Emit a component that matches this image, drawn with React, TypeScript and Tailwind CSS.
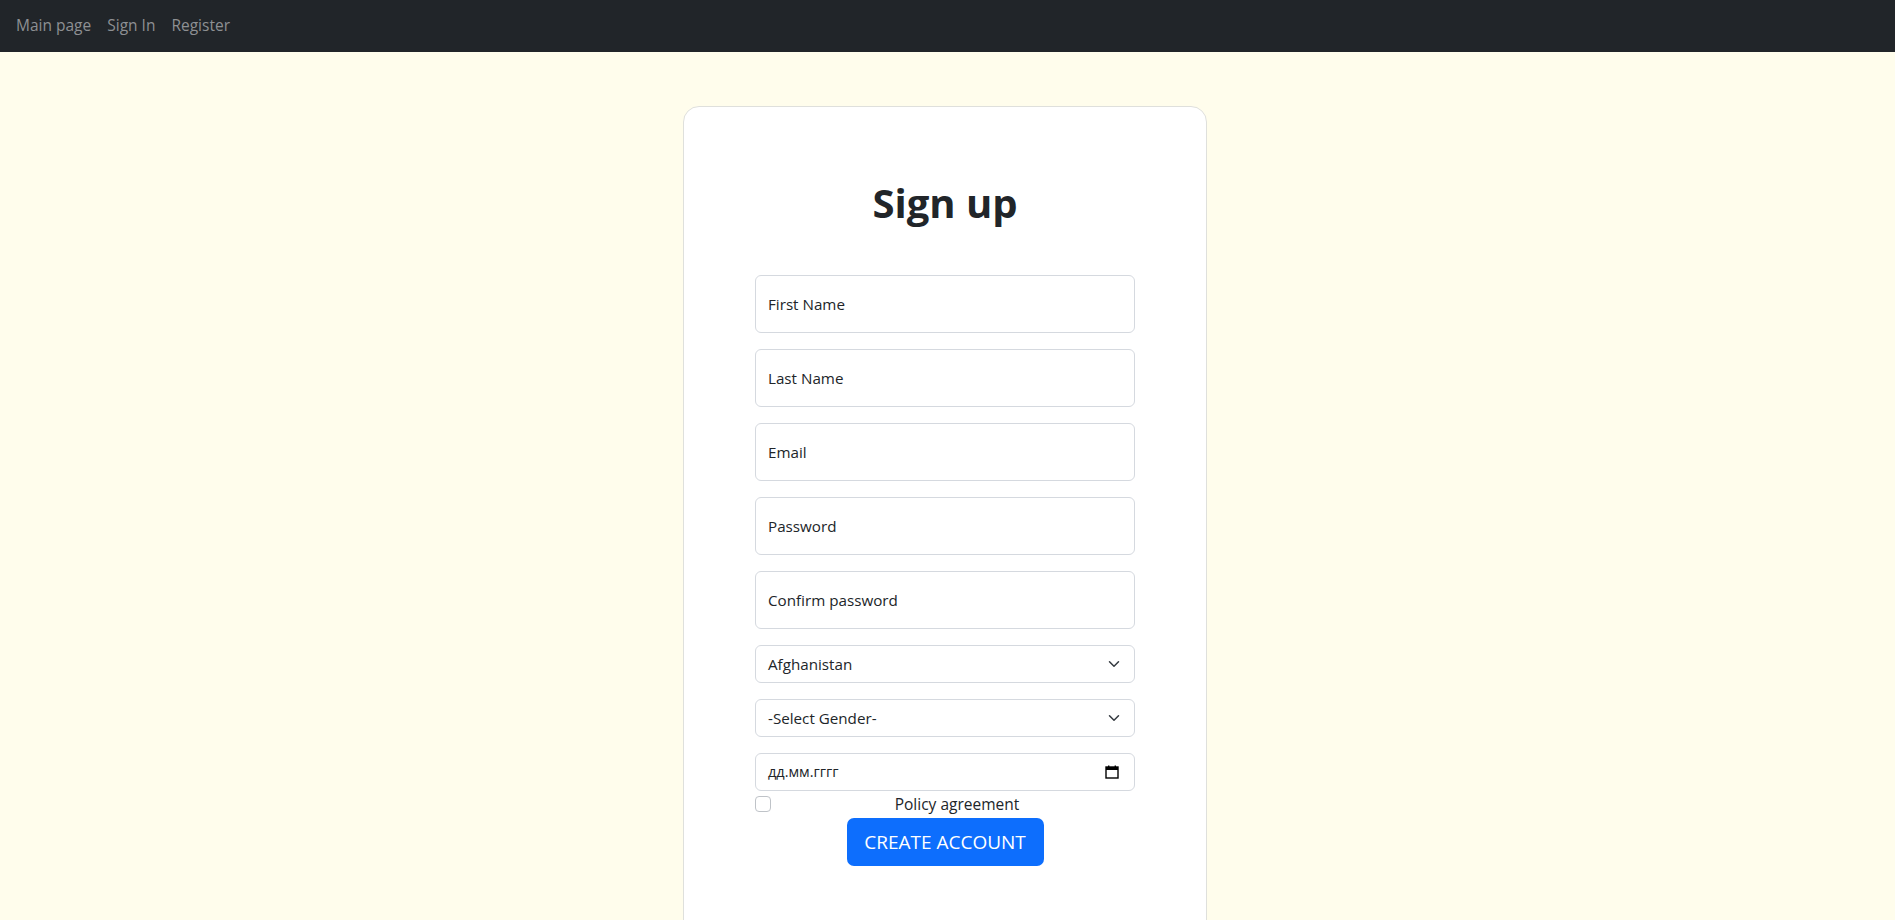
import React from "react";

const font = { fontFamily: '"Open Sans", "Noto Sans", "Liberation Sans", sans-serif' };

function Chevron() {
  return (
    <svg width="16" height="12" viewBox="0 0 16 16" className="absolute right-[12px] top-1/2 -translate-y-1/2">
      <path d="m2 5 6 6 6-6" fill="none" stroke="#343a40" strokeWidth="2" strokeLinecap="round" strokeLinejoin="round" />
    </svg>
  );
}

function FloatInput({ label }: { label: string }) {
  return (
    <div className="h-[58px] w-full rounded-[6px] border border-[#d5d9df] bg-white flex items-center pl-[12px] text-[15.2px] text-[#212529]">
      {label}
    </div>
  );
}

function SelectBox({ label }: { label: string }) {
  return (
    <div className="relative h-[38px] w-full rounded-[6px] border border-[#d5d9df] bg-white flex items-center pl-[12px] text-[15.2px] text-[#212529]">
      {label}
      <Chevron />
    </div>
  );
}

export default function App() {
  return (
    <div className="min-h-screen bg-[#fffdec]" style={font}>
      <nav className="h-[52px] bg-[#212529] flex items-center px-[8px]">
        {["Main page", "Sign In", "Register"].map((t) => (
          <a key={t} className="px-[8px] text-[15.5px] text-[#8e9093] cursor-pointer">
            {t}
          </a>
        ))}
      </nav>
      <div className="flex justify-center pr-[5px]">
        <div className="mt-[54px] w-[524px] rounded-[16px] border border-[#dfe0dc] bg-white pt-[72px] pb-[80px]">
          <h1 className="text-center text-[40px] leading-[48px] font-bold text-[#212529]">Sign up</h1>
          <div className="mx-auto mt-[48px] w-[380px] flex flex-col">
            <div className="flex flex-col gap-[16px]">
              <FloatInput label="First Name" />
              <FloatInput label="Last Name" />
              <FloatInput label="Email" />
              <FloatInput label="Password" />
              <FloatInput label="Confirm password" />
              <SelectBox label="Afghanistan" />
              <SelectBox label="-Select Gender-" />
              <div className="relative h-[38px] w-full rounded-[6px] border border-[#d5d9df] bg-white flex items-center pl-[12px] text-[14.5px] text-[#212529]">
                дд.мм.гггг
                <svg width="14" height="14" viewBox="0 0 14 14" className="absolute right-[15px] top-1/2 -translate-y-1/2">
                  <rect x="1" y="2" width="12" height="11" fill="none" stroke="#000" strokeWidth="1.4" />
                  <rect x="1" y="2" width="12" height="3" fill="#000" />
                  <rect x="3" y="0.5" width="1.4" height="2" fill="#000" />
                  <rect x="9.6" y="0.5" width="1.4" height="2" fill="#000" />
                </svg>
              </div>
            </div>
            <div className="mt-[1px] flex items-start">
              <div className="mt-[4px] h-[16px] w-[16px] rounded-[4px] border border-[#bfc3c8] bg-white shrink-0" />
              <div className="ml-[8px] flex-1 text-center text-[15.5px] leading-[24px] text-[#212529]">Policy agreement</div>
            </div>
            <button className="mx-auto mt-[2px] h-[48px] w-[197px] rounded-[7px] bg-[#0d6efd] text-white text-[19px] flex items-center justify-center">
              CREATE ACCOUNT
            </button>
          </div>
        </div>
      </div>
    </div>
  );
}
